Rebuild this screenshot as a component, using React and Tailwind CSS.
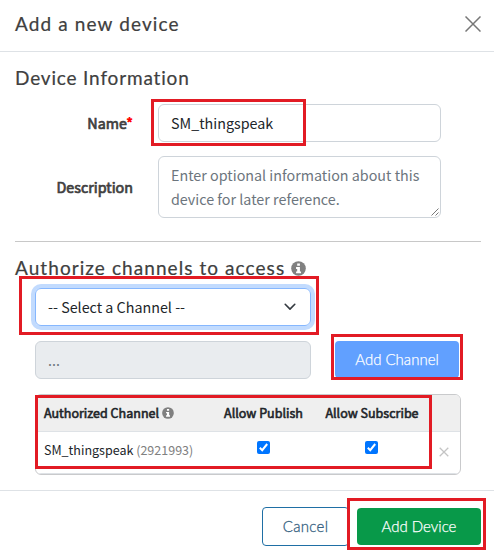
import React from 'react';

const HEAD = 'font-["Lato","Open_Sans",sans-serif]';

function InfoIcon({ className }) {
  return (
    <svg viewBox="0 0 16 16" className={className}>
      <circle cx="8" cy="8" r="7.8" fill="#808080" />
      <path d="M6.6 2.6h2.9v2.5H6.6zM5.4 6.5h4.1v4.6h1.2v2H5.4v-2h1.2V8.4H5.4z" fill="#fff" />
    </svg>
  );
}

function CheckBox() {
  return (
    <svg viewBox="0 0 13 13" className="block h-[13px] w-[13px]" role="checkbox" aria-checked="true">
      <rect width="13" height="13" rx="2" fill="#0075ff" />
      <path d="M2.8 6.8 5.2 9.2 10.2 3" fill="none" stroke="#fff" strokeWidth="2" />
    </svg>
  );
}

function Highlight({ className }) {
  return <div className={'pointer-events-none absolute border-[3px] border-[#e21b24] ' + className} />;
}

export default function App() {
  return (
    <div className={'relative flex h-[560px] w-[494px] flex-col overflow-hidden bg-white text-[#212529] font-["Noto_Sans_CJK_SC",sans-serif]'}>
      <header className="flex h-[52px] shrink-0 items-center justify-between border-b border-[#dee2e6] pr-[13px] pl-[15px]">
        <h1 className={HEAD + ' pb-[3px] text-[19px] leading-6 tracking-[1.12px] text-[#404040] [-webkit-text-stroke:0.2px_#404040]'}>Add a new device</h1>
        <svg viewBox="0 0 16 16" className="mb-[3px] h-4 w-4" fill="none" stroke="#777" strokeWidth="1.5">
          <path d="M.5.5l15 15M15.5.5l-15 15" />
        </svg>
      </header>

      <main className="flex h-[438px] shrink-0 flex-col pt-[14px] pr-[13px] pl-[15px]">
        <h2 className={HEAD + ' h-[38px] text-[19px] leading-6 tracking-[0.83px] text-[#404040] [-webkit-text-stroke:0.2px_#404040]'}>Device Information</h2>
        <div className="flex h-[38px] items-center">
          <label className="w-[118px] pb-px text-right text-[14.3px] text-[#404040] [-webkit-text-stroke:0.7px_#404040]">Name<span className="text-[#f00] [-webkit-text-stroke:0.7px_#f00]">*</span></label>
          <div className="ml-[25px] flex h-[38px] w-[283px] items-center rounded-md border border-[#ced4da] pb-px pl-3 text-[14.32px]">SM_thingspeak</div>
        </div>
        <div className="mt-[14px] flex h-[62px] items-center">
          <label className="w-[118px] pb-px text-right text-[14.3px] text-[#404040] [-webkit-text-stroke:0.7px_#404040]">Description</label>
          <div className="relative ml-[25px] h-[62px] w-[283px] rounded-md border border-[#ced4da] pt-[6px] pl-3 text-[14.32px] leading-6 whitespace-nowrap text-[#6c757d]">
            Enter optional information about this<br />device for later reference.
            <svg viewBox="0 0 8 8" className="absolute right-[1px] bottom-[1px] h-2 w-2" stroke="#555" strokeWidth=".8"><path d="M.5 7.5l7-7M4.5 7.5l3-3" /></svg>
          </div>
        </div>
        <div className="mt-[23px] h-px shrink-0 bg-[#c8c8c8]" />
        <h2 className={HEAD + ' mt-[14px] flex h-[32px] items-start text-[19px] leading-6 tracking-[1.07px] text-[#404040] [-webkit-text-stroke:0.2px_#404040]'}>
          <span className="w-[276px] whitespace-nowrap">Authorize channels to access</span>
          <InfoIcon className="mt-[5px] h-[15px] w-[15px]" />
        </h2>
        <div className="ml-5 flex h-[38px] w-[276px] shrink-0 items-center justify-between rounded-md border border-[#86b7fe] pr-[14px] pl-3 text-[14.32px] shadow-[0_0_0_4px_#c2dbfe]">
          <span>-- Select a Channel --</span>
          <svg viewBox="0 0 12 8" className="h-2 w-3" fill="none" stroke="#343a40" strokeWidth="1.6" strokeLinecap="round" strokeLinejoin="round"><path d="M1.2 1.3 6 6.1l4.8-4.8" /></svg>
        </div>
        <div className="mt-[15px] ml-5 flex h-[38px] shrink-0">
          <div className="flex w-[276px] items-center rounded-md border border-[#ced4da] bg-[#e9ecef] pb-px pl-3 text-[14.32px] text-[#6c757d]">...</div>
          <div className={HEAD + ' ml-6 flex h-[37px] w-[124px] items-center justify-center rounded-[4px] bg-[#61a0ff] pb-px text-[15px] font-light text-white [-webkit-text-stroke:0.25px_#fff]'}>Add Channel</div>
        </div>
        <div className="mt-[15px] ml-5 h-[81px] w-[426px] shrink-0 overflow-hidden rounded-md border border-[#c9cacc] text-[12.53px]">
          <div className="grid h-[37px] grid-cols-[174px_108px_108px_36px] items-center border-b border-[#dee2e6] bg-[#efefef] [-webkit-text-stroke:0.6px_#212529]">
            <span className="flex items-center pl-2 whitespace-nowrap"><span className="w-[118px]">Authorized Channel</span><InfoIcon className="h-3 w-3" /></span>
            <span className="pr-px text-center whitespace-nowrap">Allow Publish</span>
            <span className="text-center whitespace-nowrap">Allow Subscribe</span>
          </div>
          <div className="grid h-[42px] grid-cols-[174px_108px_108px_36px] border-b border-[#dee2e6]">
            <span className="pt-[9px] pl-2 whitespace-nowrap">SM_thingspeak <span className="text-[#808080]">(2921993)</span></span>
            <span className="flex justify-center pt-[9px] pr-[2px]"><CheckBox /></span>
            <span className="flex justify-center pt-[9px] pr-[2px]"><CheckBox /></span>
            <svg viewBox="0 0 10 10" className="mt-[15px] ml-[13px] h-[10px] w-[10px]" fill="none" stroke="#c4c4c4" strokeWidth="1.3"><path d="M.7.7l8.6 8.6M9.3.7.7 9.3" /></svg>
          </div>
        </div>
      </main>

      <footer className={HEAD + ' flex h-[70px] items-start justify-end border-t border-[#dee2e6] pt-4 pr-[13px] text-[15px]'}>
        <div className="flex h-[39px] w-[87px] items-center justify-center rounded-[4px] border border-[#1f6fa5] pb-px font-light tracking-[0.3px] text-[#35617f] [-webkit-text-stroke:0.3px_#35617f]">Cancel</div>
        <div className="mt-px ml-2 flex h-[37px] w-[124px] items-center justify-center rounded-[4px] bg-[#089949] pb-px font-light text-white [-webkit-text-stroke:0.25px_#fff]">Add Device</div>
      </footer>

      <Highlight className="top-[99px] left-[151px] h-[47px] w-[155px]" />
      <Highlight className="top-[276px] left-[19px] h-[59px] w-[300px]" />
      <Highlight className="top-[334px] left-[331px] h-[46px] w-[132px]" />
      <Highlight className="top-[395px] left-[35px] h-[74px] w-[397px]" />
      <Highlight className="top-[498px] left-[347px] h-[52px] w-[139px]" />
    </div>
  );
}
